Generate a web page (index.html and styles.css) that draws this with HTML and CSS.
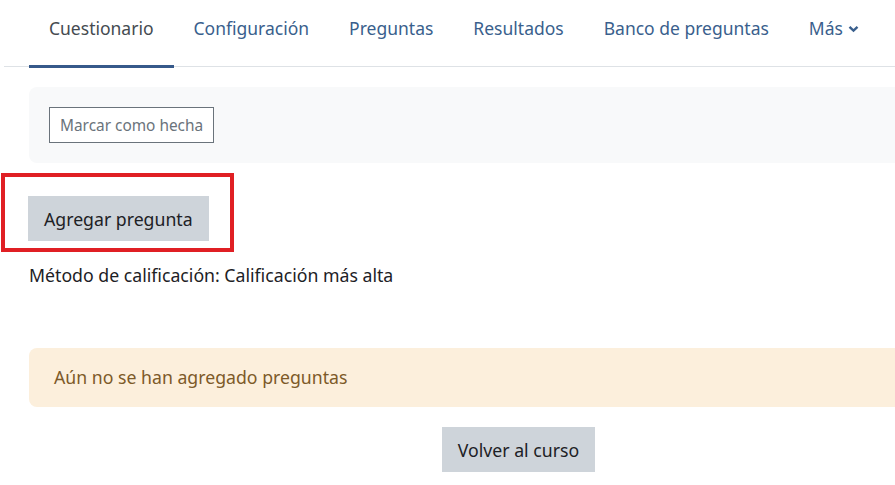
FILE: index.html
```html
<!DOCTYPE html>
<html lang="es">
<head>
    <meta charset="UTF-8">
    <meta name="viewport" content="width=device-width, initial-scale=1.0">
    <title>Cuestionario</title>
    <link rel="stylesheet" href="styles.css">
</head>
<body>
    <nav class="tabs">
        <a class="tab active" href="#">Cuestionario</a>
        <a class="tab" href="#">Configuración</a>
        <a class="tab" href="#">Preguntas</a>
        <a class="tab" href="#">Resultados</a>
        <a class="tab" href="#">Banco de preguntas</a>
        <a class="tab" href="#">Más
            <svg class="chevron" width="11" height="8" viewBox="0 0 11 8"><path d="M1.5 1.8 L5.5 5.6 L9.5 1.8" fill="none" stroke="currentColor" stroke-width="2.4"/></svg>
        </a>
    </nav>
    <main>
        <div class="completion">
            <button type="button" class="btn_outline">Marcar como hecha</button>
        </div>
        <div class="highlight">
            <button type="button" class="btn">Agregar pregunta</button>
        </div>
        <p class="grading">Método de calificación: Calificación más alta</p>
        <div class="alert">Aún no se han agregado preguntas</div>
        <div class="center">
            <button type="button" class="btn">Volver al curso</button>
        </div>
    </main>
</body>
</html>
```
FILE: styles.css
```css
body {
    margin: 0;
    font-family: "Segoe UI", "Noto Sans", sans-serif;
    color: #1d2125;
    background-color: #fff;
    overflow: hidden;
}
.tabs {
    display: flex;
    margin-left: 4px;
    padding-left: 25px;
    border-bottom: 1px solid #dee2e6;
    height: 66px;
}
.tab {
    display: flex;
    align-items: flex-start;
    padding: 16px 20px 0;
    font-size: 17.5px;
    white-space: nowrap;
    color: #3a5f8d;
    text-decoration: none;
    border-bottom: 3px solid transparent;
    margin-bottom: -2px;
}
.tab.active {
    color: #454b51;
    border-bottom-color: #36598a;
}
.chevron {
    margin: 9px 0 0 5px;
}
main {
    width: 979px;
    padding: 20px 0 0 29px;
}
.completion {
    background-color: #f8f9fa;
    border-radius: 8px;
    padding: 20px;
}
.btn_outline {
    font-family: inherit;
    font-size: 15.4px;
    color: #6a737b;
    background: #fff;
    border: 1px solid #6a737b;
    height: 36px;
    padding: 0 10px;
}
.highlight {
    display: inline-block;
    margin: 10px 0 0 -28px;
    border: 4px solid #e01f24;
    padding: 19px 21px 7px 23px;
}
.btn {
    font-family: inherit;
    font-size: 17.7px;
    color: #1d2125;
    background-color: #ced4da;
    border: none;
    height: 45px;
    padding: 0 16px;
}
.grading {
    margin: 10px 0 0;
    font-size: 17.7px;
    line-height: 27px;
}
.alert {
    margin-top: 59px;
    background-color: #fcefdc;
    color: #7d5a29;
    border-radius: 8px;
    font-size: 17.7px;
    padding: 16px 25px;
    line-height: 27px;
}
.center {
    text-align: center;
    margin-top: 20px;
}
```
